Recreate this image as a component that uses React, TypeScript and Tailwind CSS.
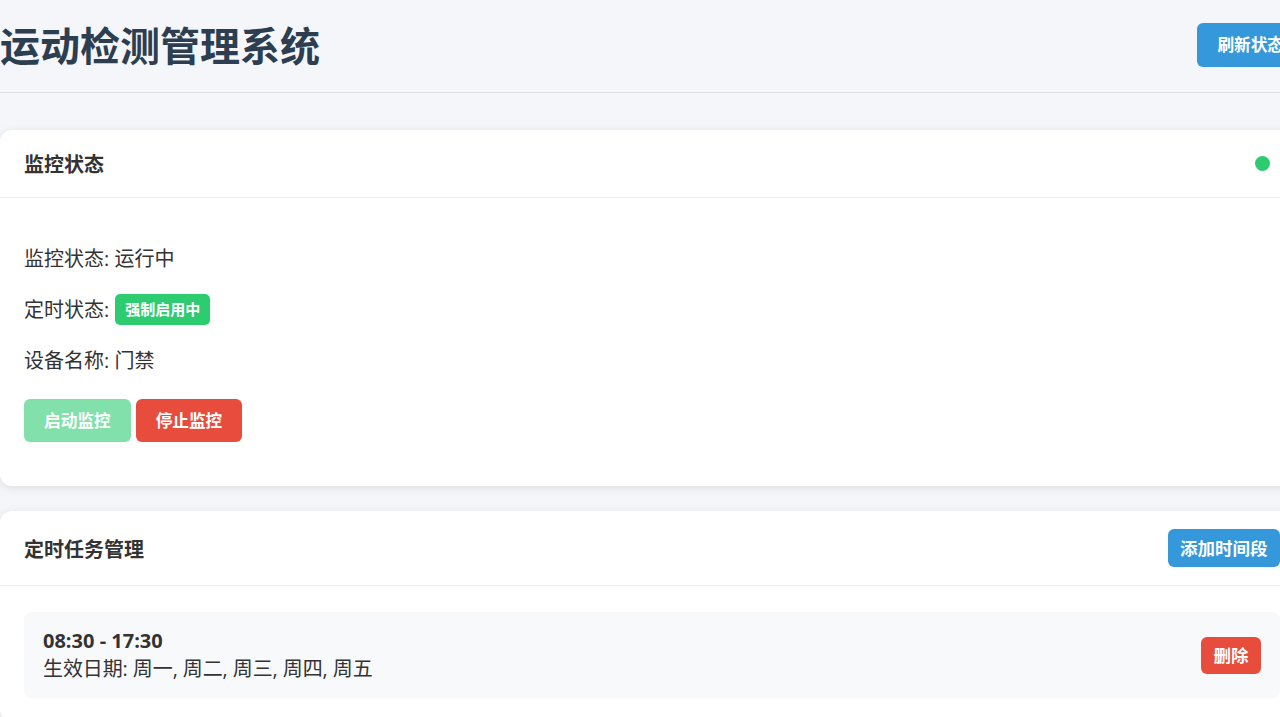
import React from "react";

const font = { fontFamily: '"Open Sans", "Noto Sans CJK SC", sans-serif' };

export default function App() {
  return (
    <div className="w-screen h-screen overflow-hidden bg-[#f5f6fa]" style={font}>
      <div className="w-[1304px]">
        <header className="h-[93px] flex items-center justify-between border-b border-[#dcdde1]">
          <h1 className="text-[40px] font-bold text-[#2c3e50] leading-none">运动检测管理系统</h1>
          <button className="h-[44px] px-[20px] rounded-[6px] bg-[#3498db] text-white font-bold text-[16.67px] -mt-[3px]">
            刷新状态
          </button>
        </header>

        <section className="mt-[37px] bg-white rounded-[12px] shadow-[0_2px_10px_rgba(0,0,0,0.1)]">
          <div className="h-[68px] flex items-center justify-between px-6 border-b border-[#eeeeee]">
            <h2 className="text-[20px] font-bold text-[#333] mt-[3px]">监控状态</h2>
            <span className="w-[15px] h-[15px] rounded-full bg-[#2ecc71] mr-[10px]" />
          </div>
          <div className="px-6 pt-[46px] pb-[44px] text-[20px] text-[#333]">
            <div className="h-[30px] flex items-center">监控状态: 运行中</div>
            <div className="mt-[20px] h-[31px] flex items-center">
              <span>定时状态:</span>
              <span className="ml-[6px] h-[31px] px-[10px] rounded-[5px] bg-[#2ecc71] text-white text-[15px] font-bold flex items-center">
                强制启用中
              </span>
            </div>
            <div className="mt-[21px] h-[30px] flex items-center">设备名称: 门禁</div>
            <div className="mt-[23px] flex gap-[5px]">
              <button className="h-[43px] px-[20px] rounded-[6px] bg-[#82e0aa] text-white font-bold text-[16.67px]">
                启动监控
              </button>
              <button className="h-[43px] px-[20px] rounded-[6px] bg-[#e74c3c] text-white font-bold text-[16.67px]">
                停止监控
              </button>
            </div>
          </div>
        </section>

        <section className="mt-[25px] bg-white rounded-[12px] shadow-[0_2px_10px_rgba(0,0,0,0.1)]">
          <div className="h-[75px] flex items-center justify-between px-6 border-b border-[#eeeeee]">
            <h2 className="text-[20px] font-bold text-[#333] mt-[4px]">定时任务管理</h2>
            <button className="h-[38px] px-[12.5px] rounded-[6px] bg-[#3498db] text-white font-bold text-[17.5px]">
              添加时间段
            </button>
          </div>
          <div className="px-6 pt-[26px] pb-[24px]">
            <div className="bg-[#f8f9fa] rounded-[8px] pl-[19px] pr-[19px] pt-[15px] pb-[15px] flex items-center justify-between">
              <div className="text-[20px] text-[#333] leading-[28px]">
                <div className="font-bold">08:30 - 17:30</div>
                <div className="tracking-[-0.1px]">生效日期: 周一, 周二, 周三, 周四, 周五</div>
              </div>
              <button className="h-[37px] px-[12.5px] rounded-[6px] bg-[#e74c3c] text-white font-bold text-[17.5px]">
                删除
              </button>
            </div>
          </div>
        </section>
      </div>
    </div>
  );
}
